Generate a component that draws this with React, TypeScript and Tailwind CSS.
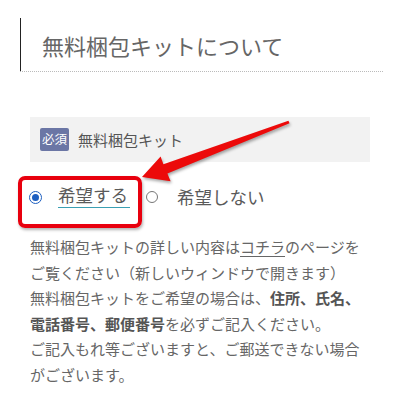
import React from 'react';

const font = { fontFamily: '"Noto Sans CJK JP", "Noto Sans", sans-serif' };

const RadioMark: React.FC<{ checked?: boolean }> = ({ checked }) =>
  checked ? (
    <span className="flex h-[13px] w-[13px] shrink-0 items-center justify-center rounded-full border-[1.5px] border-[#1d5fc0] bg-white">
      <span className="block h-[7px] w-[7px] rounded-full bg-[#1d5fc0]" />
    </span>
  ) : (
    <span className="block h-[12px] w-[12px] shrink-0 rounded-full border border-[#777] bg-white" />
  );

const Arrow: React.FC = () => (
  <svg
    className="pointer-events-none absolute left-0 top-0 drop-shadow-[1px_2px_1.5px_rgba(0,0,0,0.35)]"
    width="400"
    height="410"
    viewBox="0 0 400 410"
  >
    <polygon
      points="142,177 160.6,156.4 163.4,164.2 288.4,120.8 289.6,123.2 167.4,173.6 170.6,181.2"
      fill="#ec0a0a"
    />
  </svg>
);

export default function App() {
  return (
    <div className="relative h-[410px] w-[400px] overflow-hidden bg-white" style={font}>
      {/* Section heading */}
      <div className="ml-5 mt-[18px] w-[363px]">
        <h2 className="flex h-[54px] items-center border-l border-[#222] pl-[21px] text-[22px] leading-none font-normal text-[#666]">
          無料梱包キットについて
        </h2>
        <div className="-mt-px border-b border-dotted border-[#bbb]" />
      </div>

      {/* Field label */}
      <div className="mx-[30px] mt-[45px] flex h-[45px] w-[340px] items-center gap-[9px] bg-[#f2f2f2] pl-[10px]">
        <span className="flex h-[23px] w-[29px] items-center justify-center rounded-[2px] bg-[#6b76a5] text-[12.5px] leading-none text-white">
          必須
        </span>
        <span className="text-[15px] leading-none text-[#555]">無料梱包キット</span>
      </div>

      {/* Radio options */}
      <div className="relative mt-[15px] flex h-[40px] items-center pl-[29px]">
        <RadioMark checked />
        <span className="ml-[16px] border-b border-[#3a9fb3] pb-[4px] pr-[2px] text-[17.5px] leading-none text-[#5a5a5a]">
          希望する
        </span>
        <span className="ml-[16px] flex items-center">
          <RadioMark />
        </span>
        <span className="ml-[19px] text-[17.5px] leading-none text-[#5a5a5a]">希望しない</span>
        <div className="pointer-events-none absolute left-[18px] top-[-1px] h-[52px] w-[124px] rounded-[7px] border-4 border-[#e8000e] shadow-[1px_2px_3px_rgba(0,0,0,0.3)]" />
      </div>

      {/* Notes */}
      <div className="mt-[17px] px-[30px] text-[15px] leading-[25.5px] text-[#666]">
        <p className="whitespace-nowrap">
          無料梱包キットの詳しい内容は<span className="underline underline-offset-[3px]">コチラ</span>のページを
        </p>
        <p className="whitespace-nowrap">ご覧ください（新しいウィンドウで開きます）</p>
        <p className="whitespace-nowrap">
          無料梱包キットをご希望の場合は、<b className="font-bold text-[#555]">住所、氏名、</b>
        </p>
        <p className="whitespace-nowrap">
          <b className="font-bold text-[#555]">電話番号、郵便番号</b>を必ずご記入ください。
        </p>
        <p className="whitespace-nowrap">ご記入もれ等ございますと、ご郵送できない場合</p>
        <p className="whitespace-nowrap">がございます。</p>
      </div>

      <Arrow />
    </div>
  );
}
